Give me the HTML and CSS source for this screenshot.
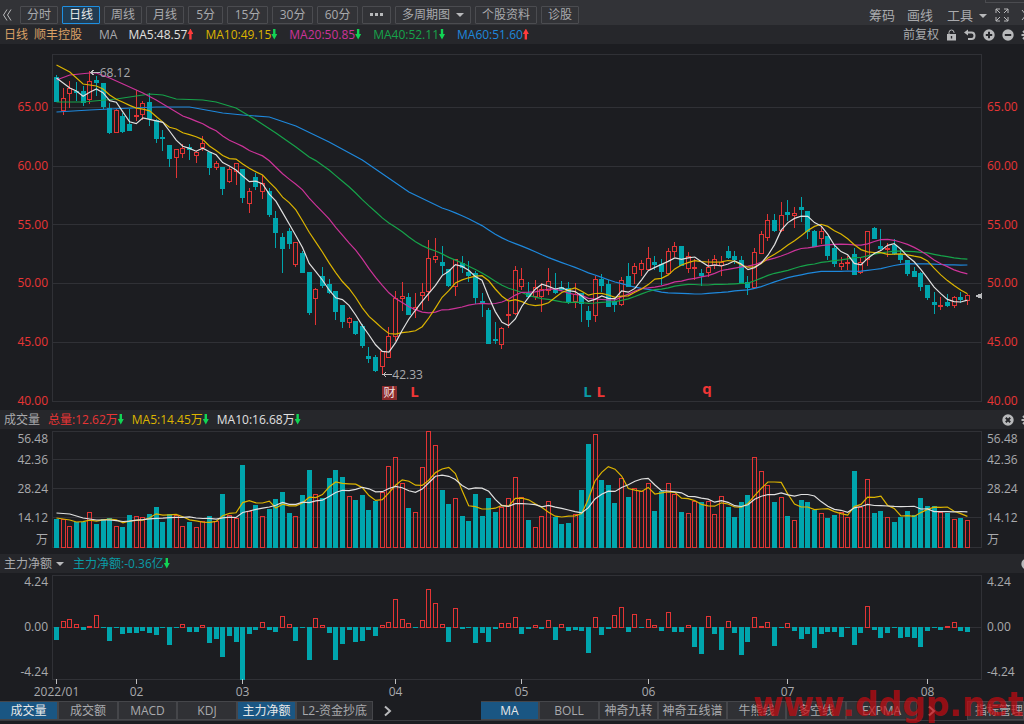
FILE: index.html
```html
<!DOCTYPE html>
<html lang="zh-CN">
<head>
    <meta charset="UTF-8">
    <meta name="viewport" content="width=device-width, initial-scale=1.0">
    <title>顺丰控股 日线</title>
    <link rel="stylesheet" href="styles.css">
</head>
<body>

    <header class="toolbar">
        <button class="icon-btn" aria-label="收起">
            <svg width="10" height="14" viewBox="0 0 10 14"><path d="M5 1.500 L1.500 7 L5 12.500 M9 1.500 L5.500 7 L9 12.500"/></svg>
        </button>
        <nav class="periods">
            <button>分时</button>
            <button class="active">日线</button>
            <button>周线</button>
            <button>月线</button>
            <button class="short">5分</button>
            <button class="num">15分</button>
            <button class="num">30分</button>
            <button class="num">60分</button>
            <button class="more" aria-label="更多"><i></i><i></i><i></i></button>
            <button>多周期图<span class="caret"></span></button>
            <button>个股资料</button>
            <button>诊股</button>
        </nav>
        <div class="tools">
            <button>筹码</button>
            <button>画线</button>
            <button>工具<span class="caret"></span></button>
            <button aria-label="全屏">
                <svg width="14" height="14" viewBox="0 0 14 14"><path d="M1 5 V1 H5 M1 1 L5 5 M9 1 H13 V5 M13 1 L9 5 M1 9 V13 H5 M1 13 L5 9 M13 9 V13 H9 M13 13 L9 9"/></svg>
            </button>
            <button class="edge" aria-label="展开">
                <svg width="10" height="12" viewBox="0 0 10 12"><path d="M1 1 L5 6 L1 11"/></svg>
            </button>
        </div>
    </header>

    <section class="info">
        <span class="orange">日线</span>
        <span class="orange">顺丰控股</span>
        <span class="ma-title">MA</span>
        <div class="values">
            <span class="white">MA5:48.57<b class="arrow up"></b></span>
            <span class="yellow">MA10:49.15<b class="arrow down"></b></span>
            <span class="pink">MA20:50.85<b class="arrow down"></b></span>
            <span class="green">MA40:52.11<b class="arrow down"></b></span>
            <span class="blue">MA60:51.60<b class="arrow up"></b></span>
        </div>
        <div class="actions">
            <button>前复权</button>
            <button aria-label="锁定">
                <svg width="11" height="12" viewBox="0 0 11 12"><path d="M3 6 V3.500 Q3 1 5.500 1 Q8 1 8 3.500 V4"/><path class="fill" d="M1 5 H10 V11.500 H1 Z M4.800 7 V9.500 H6.200 V7 Z"/></svg>
            </button>
            <button aria-label="撤销">
                <svg width="12" height="12" viewBox="0 0 12 12"><path class="bold" d="M2 3.500 H7.500 Q10.500 3.500 10.500 6.800 Q10.500 10 7.500 10 H4"/><path class="fill" d="M0 3.500 L4 0.500 V6.500 Z"/></svg>
            </button>
            <button aria-label="放大">
                <svg width="12" height="12" viewBox="0 0 12 12"><circle class="fill" cx="6" cy="6" r="5.700"/><path class="cut" d="M2.800 6 H9.200 M6 2.800 V9.200"/></svg>
            </button>
            <button aria-label="缩小">
                <svg width="12" height="12" viewBox="0 0 12 12"><circle class="fill" cx="6" cy="6" r="5.700"/><path class="cut" d="M2.800 6 H9.200"/></svg>
            </button>
            <button class="edge" aria-label="设置">
                <svg width="12" height="12" viewBox="0 0 12 12"><path class="bold" d="M6 0.500 V3 M6 9 V11.500 M0.500 6 H3 M9 6 H11.500 M2 2 L4 4 M8 8 L10 10 M2 10 L4 8 M8 4 L10 2"/><circle cx="6" cy="6" r="3"/></svg>
            </button>
        </div>
    </section>

    <main>
        <section class="panel price">
            <div class="axis left"><span>65.00</span><span>60.00</span><span>55.00</span><span>50.00</span><span>45.00</span><span>40.00</span></div>
            <svg class="plot" id="priceChart"></svg>
            <div class="axis right"><span>65.00</span><span>60.00</span><span>55.00</span><span>50.00</span><span>45.00</span><span>40.00</span></div>
        </section>

        <div class="panel-head">
            <span>成交量</span>
            <span class="red">总量:12.62万<b class="arrow down"></b></span>
            <span class="yellow">MA5:14.45万<b class="arrow down"></b></span>
            <span class="white">MA10:16.68万<b class="arrow down"></b></span>
            <div class="actions">
                <button aria-label="关闭">
                    <svg width="12" height="12" viewBox="0 0 12 12"><circle class="fill" cx="6" cy="6" r="5.700"/><path class="cut" d="M3.800 3.800 L8.200 8.200 M8.200 3.800 L3.800 8.200"/></svg>
                </button>
                <button class="edge" aria-label="设置">
                    <svg width="12" height="12" viewBox="0 0 12 12"><path class="bold" d="M6 0.500 V3 M6 9 V11.500 M0.500 6 H3 M9 6 H11.500 M2 2 L4 4 M8 8 L10 10 M2 10 L4 8 M8 4 L10 2"/><circle cx="6" cy="6" r="3"/></svg>
                </button>
            </div>
        </div>
        <section class="panel volume">
            <div class="axis left"><span>56.48</span><span>42.36</span><span>28.24</span><span>14.12</span><span>万</span></div>
            <svg class="plot" id="volumeChart"></svg>
            <div class="axis right"><span>56.48</span><span>42.36</span><span>28.24</span><span>14.12</span><span>万</span></div>
        </section>

        <div class="panel-head">
            <button class="picker">主力净额<span class="caret"></span></button>
            <span class="teal">主力净额:-0.36亿<b class="arrow down"></b></span>
            <div class="actions">
                <button class="edge" aria-label="关闭">
                    <svg width="12" height="12" viewBox="0 0 12 12"><circle class="fill" cx="6" cy="6" r="5.700"/></svg>
                </button>
            </div>
        </div>
        <section class="panel flow">
            <div class="axis left"><span>4.24</span><span>0.00</span><span>-4.24</span></div>
            <svg class="plot" id="flowChart"></svg>
            <div class="axis right"><span>4.24</span><span>0.00</span><span>-4.24</span></div>
        </section>
    </main>

    <footer class="tabbar">
        <nav class="tabs">
            <button class="active">成交量</button>
            <button>成交额</button>
            <button>MACD</button>
            <button>KDJ</button>
            <button class="active">主力净额</button>
            <button class="wide">L2-资金抄底</button>
        </nav>
        <button class="next" aria-label="更多指标"><svg width="8" height="12" viewBox="0 0 8 12"><path class="bold" d="M1 1.500 L6 6 L1 10.500"/></svg></button>
        <nav class="tabs main-tabs">
            <button class="active">MA</button>
            <button>BOLL</button>
            <button>神奇九转</button>
            <button class="mid">神奇五线谱</button>
            <button>牛熊线</button>
            <button>多空线</button>
            <button class="mid">EXPMA</button>
        </nav>
        <button class="next" aria-label="更多指标"><svg width="8" height="12" viewBox="0 0 8 12"><path class="bold" d="M1 1.500 L6 6 L1 10.500"/></svg></button>
        <nav class="tabs manage"><button>指标管理</button></nav>
        <div class="watermark">www.ddgp.net</div>
    </footer>

    <script src="chart.js"></script>
</body>
</html>
```
FILE: styles.css
```css
* {
    box-sizing: border-box;
}
body {
    margin: 0;
    min-height: 100vh;
    overflow: hidden;
    background: #1c1d21;
    color: #a9aaad;
    font-family: "Open Sans", "Noto Sans CJK SC", sans-serif;
    font-size: 12px;
    line-height: 18px;
}
button {
    margin: 0;
    padding: 0;
    border: none;
    background: none;
    color: inherit;
    font: inherit;
    white-space: nowrap;
    cursor: pointer;
}
svg {
    display: block;
    fill: none;
    stroke: #b8b9bb;
}
svg .fill {
    fill: #b8b9bb;
    fill-rule: evenodd;
    stroke: none;
}
svg .bold {
    stroke-width: 2;
}
svg .cut {
    stroke: #26272b;
    stroke-width: 2;
}
.caret {
    display: inline-block;
    margin-left: 6px;
    border: 4px solid transparent;
    border-top-color: #b8b9bb;
    border-bottom: none;
    vertical-align: middle;
}

/* top toolbar */
.toolbar {
    position: relative;
    display: flex;
    align-items: center;
    height: 25px;
    padding: 4px 0 0 2px;
    background: #323337;
}
.toolbar::after {
    content: "";
    position: absolute;
    top: 0;
    right: 0;
    width: 38px;
    height: 2px;
    border: 1px solid #4b4c50;
    border-width: 0 0 1px 1px;
}
.periods {
    display: flex;
    gap: 4px;
    margin-left: 8px;
}
.periods button {
    height: 18px;
    padding: 0 6px;
    border: 1px solid #4b4c50;
    border-radius: 1px;
    line-height: 16px;
}
.periods .short {
    min-width: 35px;
}
.periods .num {
    min-width: 41px;
}
.periods .active {
    border-color: #1e8fe0;
    background: #213c52;
    color: #e8e8e8;
}
.periods .more {
    display: flex;
    align-items: center;
    gap: 2px;
    padding: 0 7px;
}
.more i {
    width: 3px;
    height: 3px;
    background: #b8b9bb;
}
.tools {
    display: flex;
    align-items: center;
    gap: 12px;
    margin-left: auto;
    font-size: 13px;
}
.tools button:nth-child(3) {
    margin-left: 2px;
}
.tools button:nth-child(4) {
    margin-left: -4px;
}
.edge {
    width: 3px;
    overflow: hidden;
}

/* moving average read-outs */
.info,
.panel-head {
    display: flex;
    align-items: center;
    height: 19px;
    padding-left: 4px;
    background: #26272b;
    white-space: nowrap;
}
.info .orange {
    margin-right: 6px;
}
.ma-title {
    margin: 0 11px;
}
.values {
    display: flex;
    gap: 12px;
}
.actions {
    display: flex;
    align-items: center;
    gap: 7px;
    margin-left: auto;
}
.arrow {
    display: inline-block;
    width: 6px;
    height: 11px;
    vertical-align: -1px;
}
.up {
    background: #ff3b3b;
    clip-path: polygon(50% 0, 100% 50%, 70% 50%, 70% 100%, 30% 100%, 30% 50%, 0 50%);
}
.down {
    background: #12d454;
    clip-path: polygon(50% 100%, 100% 50%, 70% 50%, 70% 0, 30% 0, 30% 50%, 0 50%);
}
.orange { color: #d9a066; }
.white { color: #e0e0e0; }
.yellow { color: #dcb400; }
.pink { color: #cc3399; }
.green { color: #16a34a; }
.blue { color: #1e88dc; }
.red { color: #e83535; }
.teal { color: #0a9ba5; }

/* chart panels */
.panel {
    display: grid;
    grid-template-columns: 52px 1fr 42px;
}
.plot {
    width: 100%;
    overflow: visible;
}
.axis {
    display: flex;
    flex-direction: column;
    justify-content: space-between;
}
.left {
    padding-right: 4px;
    text-align: right;
}
.right {
    padding-left: 5px;
}
.price {
    padding-top: 10px;
}
.price .axis {
    padding-top: 44px;
    color: #e83535;
}
.price .plot {
    height: 348px;
    margin-bottom: 8px;
}
.volume .axis {
    display: grid;
    grid-template-rows: 20px 21px 38px 19px 25px;
    grid-template-columns: 1fr;
    align-items: center;
}
.volume .plot {
    height: 117px;
    margin: 2px 0 6px;
}
.flow .axis {
    padding-bottom: 20px;
}
.flow .plot {
    height: 126px;
    margin-top: 2px;
}
.panel-head {
    gap: 8px;
}
.picker + span {
    margin-left: 1px;
}
.picker .caret {
    margin-left: 4px;
}

/* things drawn by chart.js */
.plot line,
.plot path,
.plot rect {
    shape-rendering: crispEdges;
}
.plot .grid { stroke: #303136; }
.plot .tick { stroke: #c0c0c0; }
.plot .fall { fill: #00a5ad; stroke: #00a5ad; }
.plot .rise { fill: none; stroke: #e23434; }
.plot .solid-fall { fill: #00a5ad; stroke: none; }
.plot .ma {
    fill: none;
    stroke: currentColor;
    stroke-width: 1.2;
    shape-rendering: auto;
}
.plot text {
    fill: #a9aaad;
    stroke: none;
}
.plot .note { font-size: 12px; }
.plot .center { text-anchor: middle; }
.plot .mark { font-size: 15px; font-weight: bold; }
.plot .mark.red { fill: #f03636; }
.plot .mark.teal { fill: #0a9ba5; }
.plot .badge { fill: #8c2b2c; stroke: none; }
.plot .badge-text { fill: #f0e0e0; }
.plot .pointer { fill: #b8b9bb; stroke: none; }

/* bottom indicator tabs */
.tabbar {
    position: relative;
    display: flex;
    align-items: center;
    height: 20px;
    border-bottom: 1px solid #3a3b3f;
}
.tabs {
    display: flex;
    border: 1px solid #45464a;
    border-left: none;
}
.tabs button {
    min-width: 59px;
    height: 17px;
    border-right: 2px solid #45464a;
    background: #303135;
    line-height: 17px;
}
.tabs button:nth-child(even) { min-width: 60px; }
.tabs button.wide { min-width: 75px; }
.tabs button.mid { min-width: 69px; }
.tabs button:last-child { border-right: none; }
.tabs .active {
    background: #1a5683;
    color: #e8e8e8;
}
.next {
    padding: 0 11px;
}
.main-tabs {
    margin-left: auto;
}
.manage {
    margin-left: 20px;
}
.manage button {
    min-width: 56px;
    border-left: 1px solid #45464a;
    padding-left: 7px;
}
.watermark {
    position: absolute;
    left: calc(100% - 271px);
    bottom: -4px;
    color: rgba(200, 10, 16, 0.7);
    font: bold 33px/38px "DejaVu Sans", sans-serif;
    white-space: nowrap;
    pointer-events: none;
}
```
FILE: chart.js
```javascript
// one entry per trading day: open, close, high, low as y positions on the price plot
const candles = [
    [77,101,75,101],[110,98,88,114],[93,88,81,107],[91,92,82,100],[91,102,86,105],[99,81,71,103],[80,82,76,95],[83,106,83,108],
    [108,132,103,133],[132,110,109,132],[116,131,113,132],[124,130,109,130],[116,115,90,120],[114,103,101,119],[102,118,93,125],
    [120,138,119,142],[137,138,130,150],[145,158,145,166],[157,149,149,177],[153,148,144,157],[147,149,144,159],[155,152,151,162],
    [147,143,136,150],[152,167,152,174],[167,163,161,169],[167,188,167,194],[181,169,167,182],[171,163,163,184],[169,197,169,202],
    [203,191,188,212],[177,186,173,189],[191,183,175,198],[191,214,188,216],[218,232,211,247],[237,248,233,272],[231,243,228,248],
    [264,242,242,266],[253,272,251,272],[272,312,272,314],[298,289,288,324],[276,285,267,287],[284,292,279,293],[291,311,291,319],
    [305,321,305,327],[322,318,317,327],[321,333,321,334],[326,345,324,347],[356,358,347,362],[357,370,355,371],[366,351,351,373],
    [357,336,327,357],[336,298,291,340],[298,296,282,310],[297,314,293,314],[309,307,293,317],[295,292,283,309],[291,258,240,300],
    [259,256,238,262],[262,265,246,274],[269,285,269,286],[286,259,259,295],[263,267,256,272],[272,275,261,281],[273,297,271,303],
    [301,303,293,316],[310,343,308,343],[339,340,322,343],[344,328,327,348],[315,314,302,327],[313,270,266,314],[286,279,268,289],
    [293,296,282,297],[296,287,280,299],[296,289,283,311],[290,281,268,294],[289,292,273,293],[287,289,281,290],[288,302,282,303],
    [301,294,283,307],[293,303,293,321],[311,319,306,326],[315,279,276,321],[279,285,274,291],[284,306,280,306],[301,304,297,311],
    [304,280,277,305],[276,286,263,286],[273,266,263,283],[269,263,260,275],[269,258,247,270],[262,264,256,269],[264,271,259,284],
    [273,251,248,273],[251,246,242,256],[246,265,246,265],[268,256,252,272],[268,267,259,279],[273,275,269,285],[272,267,259,276],
    [265,259,255,268],[265,262,256,275],[251,257,246,258],[256,259,251,263],[260,283,256,283],[282,287,276,294],[287,252,248,288],
    [253,234,231,253],[237,220,214,240],[220,230,214,231],[230,215,202,231],[212,214,200,220],[215,213,207,227],[207,209,197,221],
    [211,231,211,238],[231,246,230,246],[238,231,226,243],[236,255,236,259],[248,263,245,266],[266,263,257,269],[263,262,256,269],
    [254,274,248,274],[272,262,257,273],[259,231,231,265],[228,238,227,238],[246,248,229,250],[249,248,243,256],[245,253,239,254],
    [254,259,249,262],[260,273,260,275],[271,276,267,276],[273,286,272,290],[285,297,285,299],[302,304,292,313],[306,305,297,309],
    [302,305,294,306],[305,297,296,307],[297,299,292,302],[300,295,294,304]
];

// tops of the volume bars
const volumes = [
    519,519,526,522,522,512,524,519,518,526,527,515,516,517,514,507,522,514,515,526,522,527,521,516,521,494,515,518,465,511,
    505,516,509,499,492,513,516,495,470,494,498,478,470,477,496,500,495,510,501,492,466,457,483,508,512,467,431,445,490,504,
    498,516,521,494,516,498,512,507,498,477,497,520,527,516,501,517,524,523,514,490,444,434,480,485,503,478,497,488,491,483,
    511,491,483,494,512,513,501,502,501,514,496,507,517,502,495,457,471,485,502,497,516,520,500,502,510,513,518,515,512,517,
    471,507,479,513,511,517,522,517,511,515,498,506,506,512,513,519,518,520
];

// net inflow (+) and outflow (-)
const flows = [
    -13,6,8,3,-3,1,12,-1,-14,-1,-7,-6,-6,-4,-6,-8,-1,-18,-1,3,-5,-5,2,-16,-12,-30,-9,-15,-53,-7,
    -3,5,-3,-5,11,3,-14,-1,-33,9,2,-6,-33,-17,-3,-15,-14,-3,-9,2,5,28,8,4,-1,7,38,24,3,-15,
    19,-2,-1,-16,-6,-15,-2,4,4,10,-7,-2,2,-2,7,-13,3,-4,-3,-4,-26,10,-8,-2,12,20,-5,13,-1,8,
    2,-4,15,-5,-5,2,-20,-27,11,-7,-23,6,-6,-28,-15,10,1,5,-19,-1,4,-4,-12,-7,-21,-7,-5,-5,-10,-1,
    -18,-6,21,-3,-11,-6,-1,-11,-10,-11,-20,-4,-1,-3,1,5,-4,-5
];

// averages reach back before the first visible day, so their starts are given as [day, y]
const priceAverages = [
    { days: 60, color: 'blue', lead: [[0,112],[5,110],[8,109],[15,107],[20,107],[25,113],[28,115],[32,117],[36,126],[41,142],[46,160],[53,192],[58,208]] },
    { days: 40, color: 'green', lead: [[0,102],[4,102],[9,99],[14,94],[16,95],[18,99],[22,100],[24,102],[27,108],[30,120],[33,133],[36,147],[38,157]] },
    { days: 20, color: 'pink', lead: [[0,80],[2,75],[5,73],[6,73],[8,78],[10,84],[13,93],[15,100],[18,112]] },
    { days: 10, color: 'yellow', lead: [[0,65],[2,72],[4,84],[6,86],[7,89],[8,95]] },
    { days: 5, color: 'white', lead: [[0,78],[2,88],[3,91]] }
];
const volumeAverages = [
    { days: 5, color: 'yellow', lead: [[0,518],[2,520],[3,522]] },
    { days: 10, color: 'white', lead: [[0,513],[2,514],[4,518],[6,520],[8,520]] }
];

function startChart(id, top) {
    const svg = document.getElementById(id);
    const width = svg.clientWidth;
    svg.setAttribute('viewBox', `0 ${top} ${width} ${svg.clientHeight}`);
    return { svg, width, x: i => 4.5 + i * (width - 4.5) / 139.2 };
}

function frame(width, top, bottom, lines) {
    let out = `<rect class="grid" x="0.5" y="${top + 0.5}" width="${width - 1}" height="${bottom - top - 1}" fill="none"/>`;
    lines.forEach(y => {
        out += `<line class="grid" x1="0" x2="${width}" y1="${y + 0.5}" y2="${y + 0.5}"/>`;
    });
    return out;
}

function averageLine(values, average, x) {
    const points = average.lead.map(p => [x(p[0]), p[1]]);
    for (let i = average.days - 1; i < values.length; i++) {
        const part = values.slice(i - average.days + 1, i + 1);
        const sum = part.reduce((a, b) => a + b, 0);
        points.push([x(i), sum / average.days]);
    }
    return `<polyline class="ma ${average.color}" points="${points.map(p => p[0].toFixed(1) + ',' + p[1].toFixed(1)).join(' ')}"/>`;
}

function bar(cls, x, top, bottom) {
    const left = Math.round(x - 2.5);
    if (cls === 'fall') {
        return `<rect class="solid-fall" x="${left}" y="${top}" width="5" height="${Math.max(bottom - top, 1)}"/>`;
    }
    return `<rect class="rise" x="${left + 0.5}" y="${top + 0.5}" width="4" height="${Math.max(bottom - top - 1, 0.1)}"/>`;
}

function drawPrice() {
    const { svg, width, x } = startChart('priceChart', 54);
    let out = frame(width, 54, 402, [107, 166, 224, 283, 342]);
    candles.forEach(([open, close, high, low], i) => {
        const cls = close < open ? 'rise' : 'fall';
        const top = Math.min(open, close);
        const bottom = Math.max(open, close) + 1;
        const mid = Math.round(x(i) - 2.5) + 2.5;
        out += `<path class="${cls}" d="M${mid} ${high} V${top} M${mid} ${bottom} V${low + 1}"/>`;
        out += bar(cls, x(i), top, bottom);
    });
    const closes = candles.map(c => c[1]);
    priceAverages.forEach(a => { out += averageLine(closes, a, x); });

    // highest and lowest price
    const hi = x(5), lo = x(49);
    out += `<path class="tick" d="M${hi + 1} 72.5 H${hi + 10} M${hi + 4} 70 L${hi + 1} 72.5 L${hi + 4} 75"/>`;
    out += `<text class="note" x="${hi + 10}" y="77">68.12</text>`;
    out += `<path class="tick" d="M${lo + 1} 374.5 H${lo + 10} M${lo + 4} 372 L${lo + 1} 374.5 L${lo + 4} 377"/>`;
    out += `<text class="note" x="${lo + 10}" y="379">42.33</text>`;

    // event marks
    out += `<rect class="badge" x="${x(50) - 7}" y="386" width="15" height="14" rx="1"/>`;
    out += `<text class="badge-text center" x="${x(50) + 0.5}" y="397">财</text>`;
    out += `<text class="mark red center" x="${x(54) - 1}" y="397">L</text>`;
    out += `<text class="mark teal center" x="${x(80) - 1}" y="397">L</text>`;
    out += `<text class="mark red center" x="${x(82) - 1}" y="397">L</text>`;
    out += `<text class="mark red center" x="${x(98) - 1}" y="394">q</text>`;
    out += `<path class="pointer" d="M${width - 7} 296 L${width} 293 V299 Z"/>`;
    svg.innerHTML = out;
}

function drawVolume() {
    const { svg, width, x } = startChart('volumeChart', 431);
    let out = frame(width, 431, 548, [459, 488, 517]);
    volumes.forEach((top, i) => {
        out += bar(candles[i][1] < candles[i][0] ? 'rise' : 'fall', x(i), top, 548);
    });
    volumeAverages.forEach(a => { out += averageLine(volumes, a, x); });
    svg.innerHTML = out;
}

function drawFlow() {
    const { svg, width, x } = startChart('flowChart', 575);
    let out = frame(width, 575, 680, [627]);
    flows.forEach((v, i) => {
        out += v > 0 ? bar('rise', x(i), 627 - v, 628) : bar('fall', x(i), 627, 627 - v);
    });
    const months = [[0, '2022/01'], [12, '02'], [28, '03'], [51, '04'], [70, '05'], [89, '06'], [110, '07'], [131, '08']];
    months.forEach(([i, name]) => {
        const mid = Math.floor(x(i)) + 0.5;
        out += `<line class="tick" x1="${mid}" x2="${mid}" y1="679" y2="684"/>`;
        out += `<text class="center" x="${mid}" y="696">${name}</text>`;
    });
    svg.innerHTML = out;
}

function drawAll() {
    drawPrice();
    drawVolume();
    drawFlow();
}

drawAll();
window.addEventListener('resize', drawAll);
```
